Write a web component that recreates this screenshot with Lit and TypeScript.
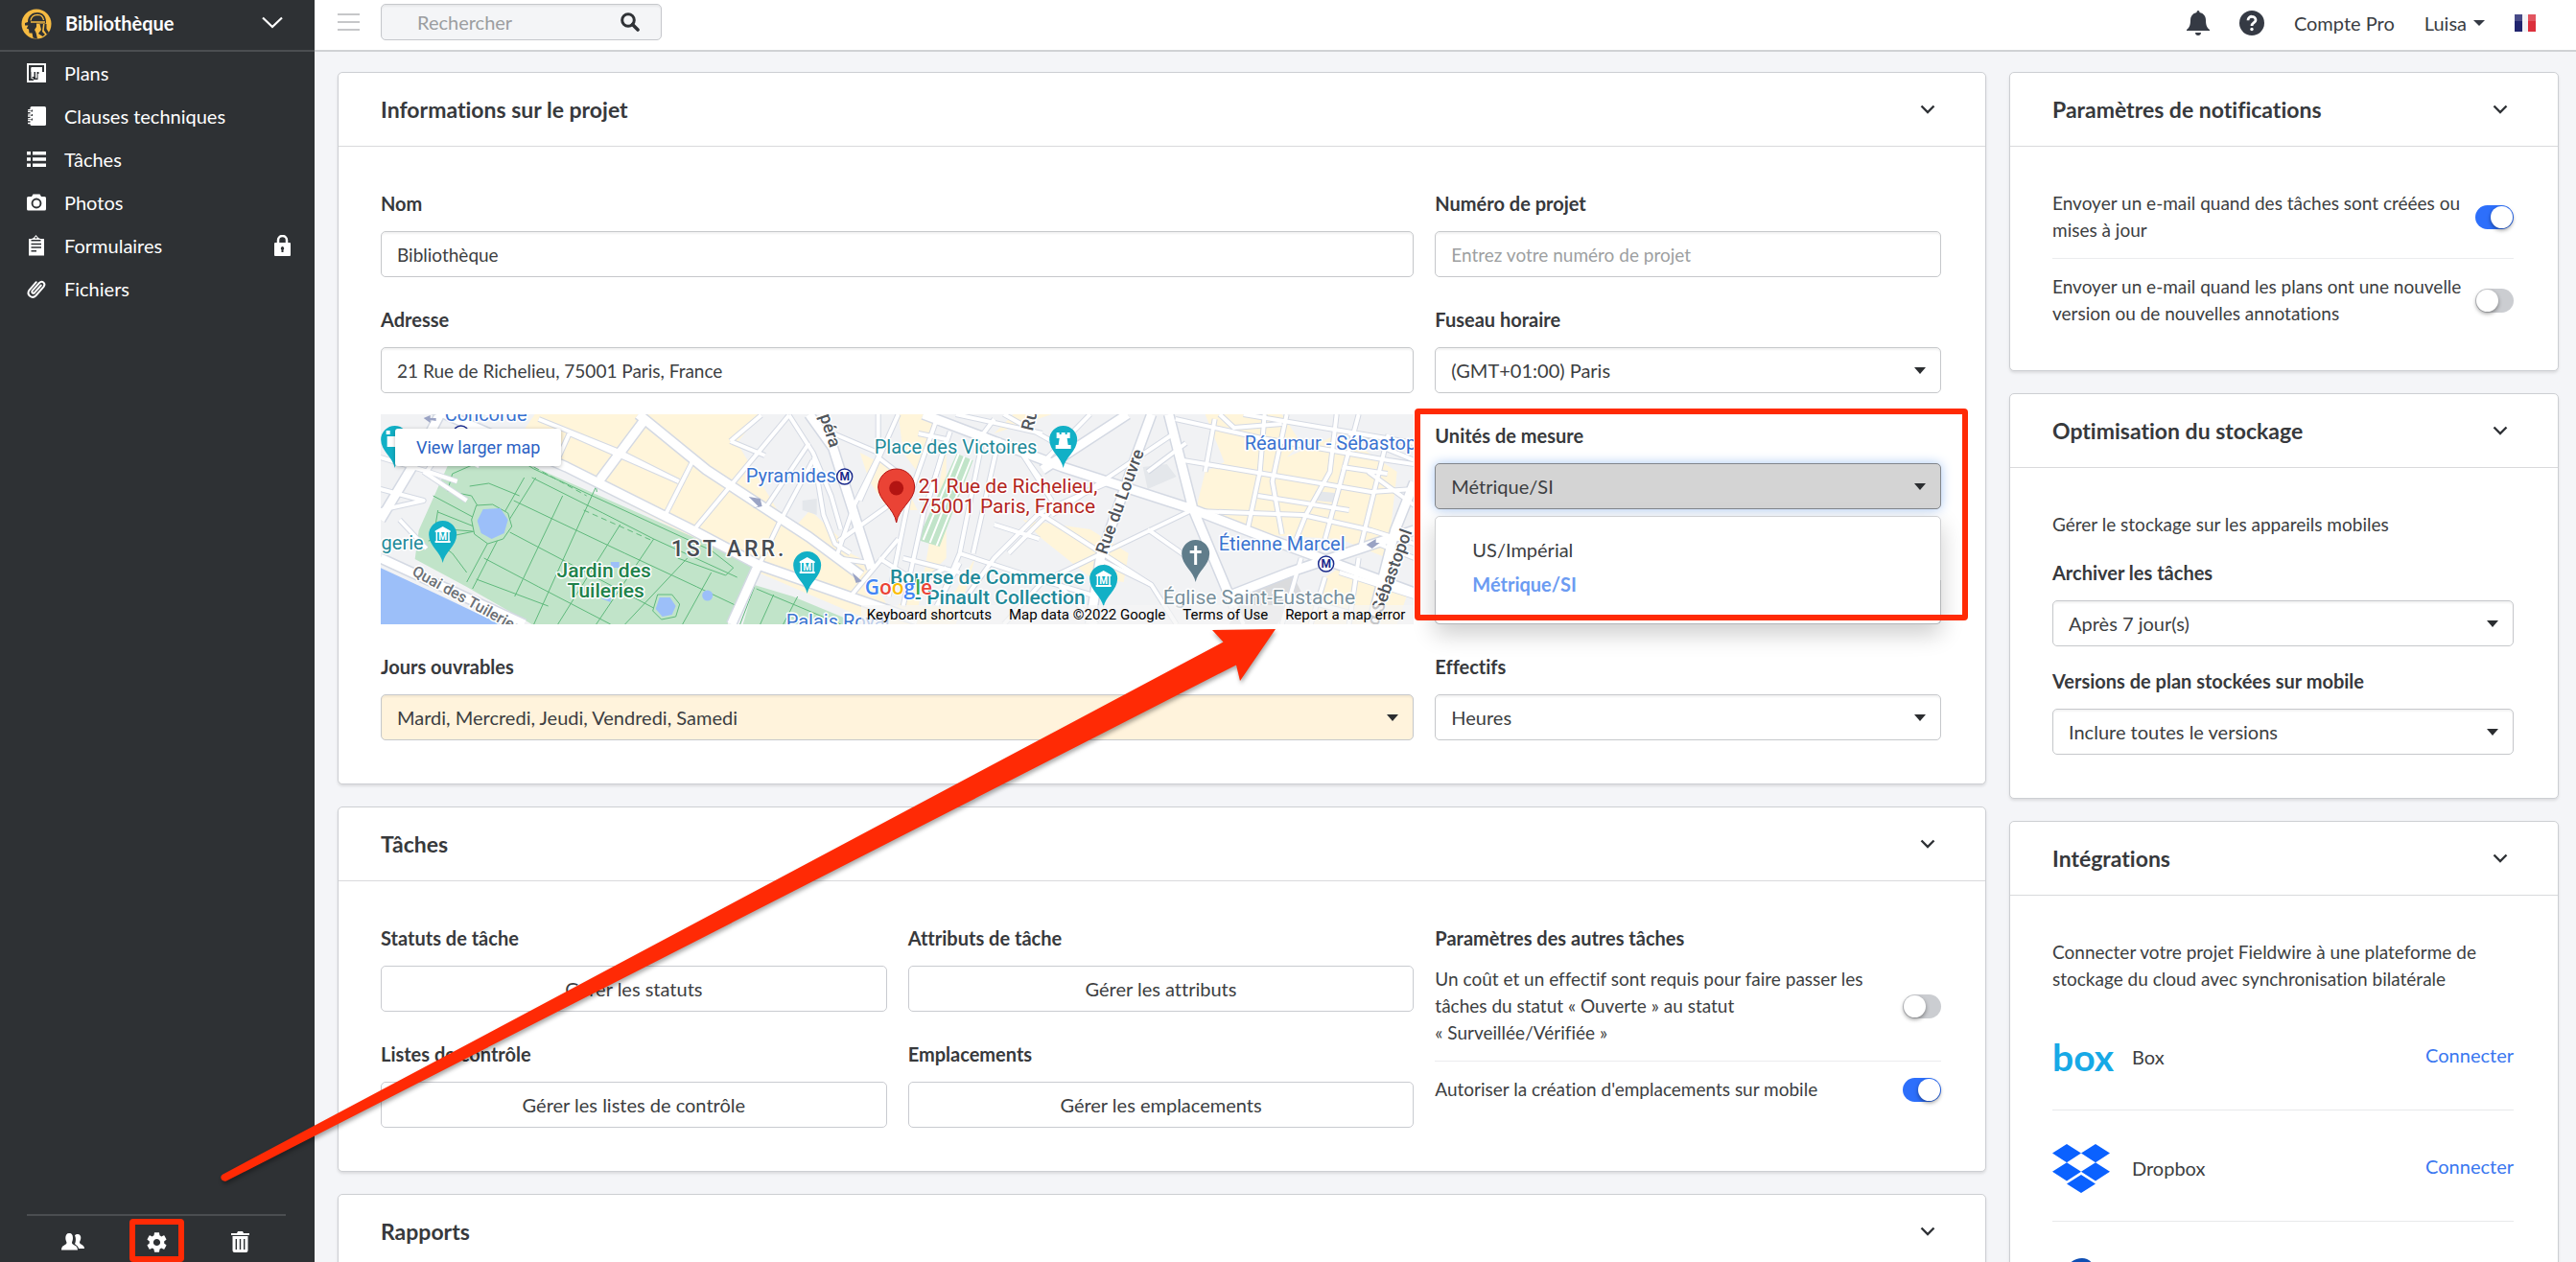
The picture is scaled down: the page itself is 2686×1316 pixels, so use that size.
import { LitElement, html, css, svg, nothing } from "lit";
import { customElement, property } from "lit/decorators.js";

const base = css`
  *, *::before, *::after { box-sizing: border-box; }
  button, input, select { font: inherit; color: inherit; margin: 0; }
  button { background: none; border: 0; padding: 0; cursor: pointer; }
  a { color: inherit; text-decoration: none; }
  p, h2, ul { margin: 0; padding: 0; }
  ul { list-style: none; }
  svg { display: block; }
`;

const icons = {
  plans: svg`<path fill="#fff" fill-rule="evenodd" d="M0 0H20V20H0ZM2 2V18H6.500V16H4.500V4H16V2ZM16 4V9H18V2H16Z"/><path fill="#2e3134" d="M2 2H18V9H16V4H4V16H7V18H2Z"/><path fill="#fff" d="M4.500 5H15V8.500H12.500V9.500H18V18H7.500V16.500H5.500V9H4.500Z"/><path fill="#2e3134" d="M7.500 9H9V15.500H5.500V14H7.500ZM10.500 9H12.500V11H11.500V17H7V15.500H10.500Z"/>`,
  book: svg`<path fill="#fff" d="M5 0H18.500Q20 0 20 1.500V18.500Q20 20 18.500 20H5Q3.500 20 3.500 18.500V1.500Q3.500 0 5 0Z"/><g fill="none" stroke="#2e3134" stroke-width="2"><path d="M3 4.500H6M3 9H6M3 13.500H6"/></g><g fill="none" stroke="#fff" stroke-width="1.400"><path d="M5 3.600H1.200M1 5.400H4.500M5 8.100H1.200M1 10H4.500M5 12.600H1.200M1 14.500H4.500M4.500 17.500H1"/></g>`,
  list: svg`<path fill="#fff" d="M0 2H4V5.500H0ZM6 2H20V5.500H6ZM0 8.200H4V11.700H0ZM6 8.200H20V11.700H6ZM0 14.400H4V18H0ZM6 14.400H20V18H6Z"/>`,
  camera: svg`<path fill="#fff" fill-rule="evenodd" d="M6.500 1.500H13.500L15 4H18.500Q20 4 20 5.500V17Q20 18.500 18.500 18.500H1.500Q0 18.500 0 17V5.500Q0 4 1.500 4H5ZM10 5.600A5.400 5.400 0 1 0 10 16.400A5.400 5.400 0 1 0 10 5.600Z"/><circle cx="10" cy="11" r="3.500" fill="#fff"/>`,
  form: svg`<path fill="#fff" d="M2 3H5L7 2L9.500 -1L12 2L14 3H18V20.500H2Z"/><path stroke="#2e3134" stroke-width="1.400" d="M4.500 4.800H14.500M4.500 8.500H15M4.500 12H15M4.500 15.800H10"/><circle cx="9.500" cy="1.800" r="1" fill="#2e3134"/>`,
  clip: svg`<path fill="none" stroke="#fff" stroke-width="2" stroke-linecap="round" d="M14.800 6.500L8 14.200C6.600 15.700 4.300 13.800 5.700 12.200L13 4C15.800 1.200 20 4.400 17.600 7.800L9.400 17.200C5.500 21.200 -.8 16.500 2.500 11.500L9.800 3.200"/>`,
};

@customElement("fw-sidebar")
class FwSidebar extends LitElement {
  static styles = [base, css`
    :host { display: flex; flex-direction: column; background: #2e3134; color: #fff; font-size: 20px; }
    .project { display: flex; align-items: center; height: 54px; padding: 0 33px 5px 22px; border-bottom: 2px solid #4b4e51; font-weight: 700; width: 100%; text-align: left; gap: 14px; }
    .project svg.logo { margin-top: 3px; }
    .name { flex: 1; }
    nav { flex: 1; }
    .item { display: flex; align-items: center; height: 45px; padding: 0 25px 2px 28px; gap: 19px; }
    .item .label { flex: 1; }
    .tools { display: flex; justify-content: center; align-items: center; margin: 0 30px 0 28px; height: 50px; border-top: 2px solid #4b4e51; padding-top: 6px; }
    .tool { display: grid; place-items: center; width: 87px; height: 40px; position: relative; }
    .marked::after { content: ""; position: absolute; left: 15px; right: 15px; top: -4px; height: 45px; border: 6px solid #ff2a05; border-radius: 4px; }
  `];
  items = [
    ["Plans", icons.plans], ["Clauses techniques", icons.book], ["Tâches", icons.list],
    ["Photos", icons.camera], ["Formulaires", icons.form, true], ["Fichiers", icons.clip],
  ] as const;
  render() {
    return html`
      <button class="project">
        <svg class="logo" width="32" height="32" viewBox="0 0 32 32">
          <circle cx="16" cy="16" r="15.500" fill="#f6bb42"/>
          <path fill="#2e3134" d="M7 14C7 7 12 4 17 4C22.500 4 26 8 26 13.500V15.500H16V19L14 22L15.500 25L17 31.500L12.500 30.500L11.500 25.500H8.500L8 21.500L5.800 20.500L7.500 17.500H4V15Z"/>
          <path fill="none" stroke="#f6bb42" stroke-width="1.300" d="M10 12.500C10.500 9 13 6.500 17 6.300C20.500 6.300 23 8.500 23.500 12M10 14H25"/>
          <path fill="#2e3134" d="M19.500 16H23L22 24L25 27L22.500 29L18 26L21 22ZM24.500 16H26.500V21L29 25L27 27L23.800 22.500Z"/>
        </svg>
        <span class="name">Bibliothèque</span>
        <svg width="22" height="13" viewBox="0 0 22 13"><path d="M1 1.500L11 11L21 1.500" fill="none" stroke="#fff" stroke-width="2.200"/></svg>
      </button>
      <nav>${this.items.map(([label, icon, locked]) => html`
        <a class="item" href="#">
          <svg width="20" height="20" viewBox="0 0 20 20" overflow="visible">${icon}</svg>
          <span class="label">${label}</span>
          ${locked ? html`<svg width="17" height="22" viewBox="0 0 17 22"><path fill="none" stroke="#fff" stroke-width="2.500" d="M4 9V5.500A4.500 4.500 0 0 1 13 5.500V9"/><rect y="8" width="17" height="14" rx="1" fill="#fff"/><path fill="#2e3134" d="M8.500 12A2 2 0 0 1 9.500 15.500V18H7.500V15.500A2 2 0 0 1 8.500 12Z"/></svg>` : nothing}
        </a>`)}
      </nav>
      <div class="tools">
        <button class="tool" aria-label="Personnes"><svg width="24" height="18" viewBox="0 0 24 18"><path fill="#fff" d="M16.500 1C19 .7 20.500 2.500 20.300 5C20.200 7.300 19 8.500 19 9.500C19 12 24 11.500 24 16H18C17.500 13 15 12.500 14 11C15 9.500 15.500 5 14 2.500C14.500 1.500 15.500 1 16.500 1ZM8 0C11 0 12 2 12 5C12 7.500 11 8.500 11 10C11 12.500 17 12 17 17.500H0C0 12 5.500 12.500 5.500 10C5.500 8.500 4.300 7.500 4.300 5C4.300 2 5.500 0 8 0Z"/></svg></button>
        <button class="tool marked" aria-label="Paramètres"><svg width="21" height="21" viewBox="1.800 1.800 20.400 20.400"><path fill="#fff" d="M19.430 12.980c.04-.32.07-.64.07-.98s-.03-.66-.07-.98l2.110-1.650c.19-.15.24-.42.12-.64l-2-3.460c-.12-.22-.39-.3-.61-.22l-2.490 1c-.52-.4-1.080-.73-1.690-.98l-.38-2.650C14.460 2.180 14.250 2 14 2h-4c-.25 0-.46.18-.49.42l-.38 2.650c-.61.25-1.170.59-1.690.98l-2.490-1c-.23-.09-.49 0-.61.22l-2 3.460c-.13.22-.07.49.12.64l2.110 1.650c-.04.32-.07.65-.07.98s.03.66.07.98l-2.110 1.650c-.19.15-.24.42-.12.64l2 3.460c.12.22.39.3.61.22l2.490-1c.52.4 1.080.73 1.690.98l.38 2.650c.03.24.24.42.49.42h4c.25 0 .46-.18.49-.42l.38-2.650c.61-.25 1.170-.59 1.690-.98l2.490 1c.23.09.49 0 .61-.22l2-3.460c.12-.22.07-.49-.12-.64l-2.110-1.650zM12 15.500c-1.930 0-3.500-1.570-3.500-3.500s1.570-3.500 3.500-3.500 3.500 1.570 3.500 3.500-1.570 3.500-3.500 3.500z"/></svg></button>
        <button class="tool" aria-label="Corbeille"><svg width="19" height="22" viewBox="0 0 19 22"><path fill="#fff" fill-rule="evenodd" d="M0 2H6L7 0H12L13 2H19V4H0ZM1.500 5H17.500V20Q17.500 22 15.500 22H3.500Q1.500 22 1.500 20ZM4.600 8V19H6V8ZM8.800 8V19H10.200V8ZM13 8V19H14.400V8Z"/></svg></button>
      </div>`;
  }
}

@customElement("fw-topbar")
class FwTopbar extends LitElement {
  static styles = [base, css`
    :host { display: flex; align-items: center; height: 54px; padding: 0 42px 0 24px; background: #fff; border-bottom: 2px solid #d0d2d5; font-size: 20px; color: #3a3d42; }
    .menu { display: grid; gap: 6px; width: 23px; margin: 0 22px 7px 0; }
    .menu i { height: 2px; background: #c6c7c9; }
    .search { display: flex; align-items: center; width: 293px; height: 38px; margin-bottom: 7px; padding: 0 22px 0 37px; border: 1px solid #c6c8cc; border-radius: 5px; background: #f4f5f7; box-shadow: inset 0 2px 2px #0000000d; }
    .search input { flex: 1; min-width: 0; border: 0; background: none; outline: 0; padding: 0; }
    .search input::placeholder { color: #9b9da0; opacity: 1; }
    .right { margin-left: auto; display: flex; align-items: center; gap: 31px; padding-bottom: 4px; }
    .user { display: flex; align-items: center; gap: 7px; }
  `];
  render() {
    return html`
      <button class="menu" aria-label="Menu"><i></i><i></i><i></i></button>
      <div class="search">
        <input type="search" aria-label="Rechercher" placeholder="Rechercher">
        <button aria-label="Lancer la recherche"><svg width="20" height="20" viewBox="0 0 20 20"><circle cx="8" cy="8" r="6.300" fill="none" stroke="#2f3236" stroke-width="3"/><path d="M12.500 12.500L18 18" stroke="#2f3236" stroke-width="3.600" stroke-linecap="round"/></svg></button>
      </div>
      <div class="right">
        <button aria-label="Notifications"><svg width="24" height="26" viewBox="0 0 24 26"><path fill="#353a44" d="M12 0C13 0 13.500 .8 13.500 2C18 3 20 6 20 10C20 16 21.500 18 24 20V21H0V20C2.500 18 4 16 4 10C4 6 6 3 10.500 2C10.500 .8 11 0 12 0ZM9 23H15C15 25 13.700 26 12 26S9 25 9 23Z"/></svg></button>
        <button aria-label="Aide"><svg width="26" height="26" viewBox="0 0 26 26"><circle cx="13" cy="13" r="13" fill="#353a44"/><path d="M9 10.200C9 4.800 17.200 5.200 17 10C16.900 12.800 13 12.600 13 16" fill="none" stroke="#fff" stroke-width="2.800"/><circle cx="13" cy="19.500" r="1.700" fill="#fff"/></svg></button>
        <a href="#">Compte Pro</a>
        <button class="user">Luisa <svg width="12" height="6" viewBox="0 0 12 6"><path fill="#353a44" d="M0 0H12L6 6Z"/></svg></button>
        <button aria-label="Langue"><svg width="22" height="18" viewBox="0 0 22 18"><rect width="8" height="18" fill="#20246e"/><rect x="8" width="6" height="18" fill="#f2f2f4"/><rect x="14" width="8" height="18" fill="#dc2f3c"/><rect width="22" height="7" fill="#fff" opacity=".18"/></svg></button>
      </div>`;
  }
}

@customElement("fw-card")
class FwCard extends LitElement {
  static styles = [base, css`
    :host { display: block; background: #fff; border: 1px solid #cdcfd3; border-radius: 5px; box-shadow: 0 2px 3px #0000001a; }
    header { display: flex; align-items: center; justify-content: space-between; height: 77px; padding: 0 52px 0 44px; border-bottom: 1px solid #d9dadc; }
    h2 { font-size: 23px; line-height: 30px; font-weight: 700; color: #37393c; }
    .body { padding: 45px 46px 45px 44px; }
  `];
  @property() heading = "";
  render() {
    return html`
      <header><h2>${this.heading}</h2>
        <button aria-label="Réduire"><svg width="16" height="10" viewBox="0 0 16 10"><path d="M1.500 1.500L8 8L14.500 1.500" fill="none" stroke="#2f3236" stroke-width="2.400"/></svg></button>
      </header>
      <div class="body"><slot></slot></div>`;
  }
}

const controls = css`
  .field { display: grid; gap: 15px; min-width: 0; }
  .label { font-size: 20px; font-weight: 700; line-height: 28px; color: #37393c; }
  .input, .select select { width: 100%; height: 48px; border: 1px solid #c6c8cb; border-radius: 5px; background: #fff; padding: 0 16px; outline: 0; box-shadow: inset 0 2px 2px #0000000d; }
  .input::placeholder { color: #9d9fa1; opacity: 1; }
  .select { display: grid; align-items: center; font-size: 20px; }
  .select > * { grid-area: 1 / 1; }
  .select select { appearance: none; }
  .select svg { justify-self: end; margin-right: 16px; pointer-events: none; }
  .warm select { background: #fff3dc; }
  .open select { background: #d4d4d4; border-color: #82868c; box-shadow: 0 0 12px #a9c8f4; }
  .rows { display: grid; gap: 15px; align-content: start; }
  .toggle { display: flex; align-items: center; justify-content: space-between; gap: 10px; line-height: 28px; }
  .toggle + .toggle { border-top: 1px solid #ebecee; padding-top: 15px; }
  .switch { appearance: none; flex: none; display: flex; width: 40px; height: 25px; border-radius: 13px; background: #cbcdd1; }
  .switch::before { content: ""; width: 23px; height: 23px; margin: 1px; border-radius: 50%; background: #fff; box-shadow: 0 2px 4px #0006; }
  .switch:checked { background: #2d6ffb; justify-content: flex-end; }
`;

const select = (id: string, label: string, value: string, kind = "") => html`
  <div class="field">
    <label class="label" for=${id}>${label}</label>
    <div class="select ${kind}">
      <select id=${id}><option>${value}</option></select>
      <svg width="12" height="7" viewBox="0 0 12 7"><path fill="#2b2d30" d="M0 0H12L6 7Z"/></svg>
    </div>
  </div>`;

const toggle = (label: string, on: boolean) => html`
  <label class="toggle"><span>${label}</span><input class="switch" type="checkbox" role="switch" .checked=${on}></label>`;

@customElement("fw-map")
class FwMap extends LitElement {
  static styles = [base, css`
    :host { display: block; position: relative; height: 219px; overflow: hidden; font-family: Roboto, sans-serif; }
    .canvas { width: 100%; height: 100%; }
    .canvas text { font-family: Roboto, sans-serif; font-size: 20px; paint-order: stroke; stroke: #fff; stroke-width: 3px; stroke-linejoin: round; }
    .canvas .blue { fill: #3a73d0; }
    .canvas .teal { fill: #1f8a99; }
    .canvas .museum { font-size: 21px; font-weight: 500; }
    .canvas .green { fill: #20824a; font-size: 21px; font-weight: 500; text-anchor: middle; }
    .canvas .street { fill: #50555b; font-size: 18px; font-weight: 500; }
    .canvas .quay { fill: #6b7076; font-size: 16px; }
    .canvas .slate { fill: #78909c; font-size: 21px; }
    .canvas .place { fill: #b3261e; font-size: 21px; }
    .canvas .district { fill: #474c52; font-size: 23px; font-weight: 500; letter-spacing: 3px; }
    .canvas .mark { fill: #1a2a8c; font-size: 12px; font-weight: 700; text-anchor: middle; stroke: none; }
    .canvas .pinmark { fill: #fff; font-size: 10px; font-weight: 700; text-anchor: middle; stroke: none; }
    .canvas .brand { font-family: "Open Sans", sans-serif; font-size: 21px; font-weight: 600; stroke-width: 2px; }
    .larger { position: absolute; left: 15px; top: 15px; padding: 0 22px; line-height: 39px; font-size: 18px; color: #2b62c4; background: #fff; border-radius: 3px; box-shadow: 0 1px 4px #0004; }
    .legal { position: absolute; right: 0; bottom: 0; display: flex; gap: 18px; padding: 0 9px 0 6px; font-size: 15px; line-height: 20px; color: #000; background: #f5f5f5b3; }
  `];
  minor = [
    "M197 20L311 70", "M165 5L247 38L311 70", "M326 48L297 105", "M397 1L365 28M426 1L329 118", "M365 28L401 43",
    "M426 1L451 40L470 85L480 120", "M451 48L415 115L396 155", "M447 30L400 100M452 45L462 105L474 135L490 145",
    "M472 20L519 40M519 0L519 45L494 95M540 0L500 90M519 45L545 65M494 95L475 150L510 155",
    "M478 132L530 95M540 130L490 190M520 150L560 175L590 160", "M197 20L183 51", "M0 78L45 90L0 100M45 60L90 90M20 110L48 140",
    "M0 45L50 60L80 70M48 60L70 30L140 40M100 55L118 20", "M579 8L551 88L530 190M594 18L567 100L545 200",
    "M629 21L604 145L583 195M645 25L618 145M579 8L629 21L669 41L700 90", "M561 20L590 26L570 95M640 5L625 25",
    "M604 145L683 171L747 190M604 155L580 200M545 150L604 165", "M669 41L690 70M762 70L687 103L640 150L604 200",
    "M687 103L804 178M844 101L690 175L650 219M826 21L700 105M800 60L840 30", "M747 150L804 178L830 219M700 170L747 219",
    "M640 115L687 130M655 145L700 100", "M829 5L919 25L1051 48L1078 52M837 48L915 61L1033 81L1078 78M851 101L962 105L1033 121L1078 135",
    "M922 0L917 60L904 121M945 0L930 70L940 125M997 0L990 60L965 105L955 130M1051 21L1022 138M1020 0L1000 75L985 130",
    "M870 5L860 60M915 85L1010 100M1003 55L1050 62M900 0L1078 30M1010 20L1078 48M1030 60L1078 95",
    "M960 150L940 219M985 170L970 219M1000 165L1078 190M1020 150L1010 219M930 185L1040 215M1040 135L1078 150",
    "M740 0L690 51M650 0L700 28M800 120L850 155M885 185L900 219M600 0L690 20M875 0L890 14L940 10",
  ];
  pin(x: number, y: number, color: string, mark: unknown) {
    return svg`<g transform="translate(${x} ${y})"><path fill=${color} d="M0 0C-2 -11 -14.500 -18 -14.500 -29.500A14.500 14.500 0 0 1 14.500 -29.500C14.500 -18 2 -11 0 0Z"/>${mark}</g>`;
  }
  museum() {
    return svg`<path fill="#fff" d="M0 -38L8 -33.500V-32H-8V-33.500ZM-8 -23H8V-21H-8Z"/><path fill="none" stroke="#fff" stroke-width="1.500" d="M-6.300 -32V-23M6.300 -32V-23"/><text class="pinmark" x="0" y="-23.800">M</text>`;
  }
  render() {
    const teal = "#12b0c6";
    return html`
      <svg class="canvas" viewBox="0 0 1078 219" preserveAspectRatio="xMidYMid slice" role="img" aria-label="Carte">
        <rect width="1078" height="219" fill="#f1f2f4"/>
        <g fill="#fff5da">
          <path d="M161 0H395L372 30L420 110L500 150L540 219H520L394 165L194 60L140 30Z"/>
          <path d="M540 0H579L560 60L545 40ZM590 30L561 200H590L620 150L600 219H520L590 150Z"/>
          <path d="M860 0H940L960 30L945 45L1000 20L1060 60L1050 150L1000 130L905 125L850 100L860 60L880 50ZM1000 160L1070 190L1060 219H960L985 170Z"/>
          <path d="M670 110L740 120L780 145L775 175L740 170L690 130ZM660 0L700 0L640 20ZM500 40L540 60L560 100L530 100L510 70ZM448 100L480 130L460 150L430 120Z"/>
        </g>
        <g fill="#e4e7eb"><path d="M795 55L820 52L830 65L800 78ZM440 90L455 88L455 105L440 100ZM975 80L995 82V92L975 90Z"/><path fill="#dadbdd" d="M900 190L950 165L960 185L935 219H885Z"/></g>
        <path fill="#9cbff9" d="M0 160L60 188L125 219H0Z"/>
        <path fill="#c1e4c9" d="M70 54H158L326 128L390 158L362 219H158L90 180L36 151L40 121Z"/>
        <path fill="#c1e4c9" d="M390 178L430 190L500 219H378Z"/>
        <path fill="#c1e4c9" d="M601 41L618 48L583 138L560 131Z"/>
        <g fill="none" stroke="#5fb97c" stroke-width="1">
          <path d="M75 62L130 38L160 57L345 142L368 160L360 168L310 150M158 66L232 103L285 130L372 170M55 85L98 108M150 66L125 110L90 175M162 66L128 120L96 182M139 90L255 145L330 180L372 200M135 123L215 165L300 210M108 150L165 180L240 219M190 85L140 190M225 75L160 219M250 115L185 219M285 130L225 219M320 150L255 219M345 165L315 219M75 62L70 80L95 85L104 100M93 75L113 72L145 85M60 100L55 130L75 145L90 165M50 132L98 122M60 102L100 118M71 120L96 122M100 172L175 200M390 180L375 219M410 188L396 219M435 190L420 219M392 182L480 219"/>
          <path stroke-dasharray="6 4" d="M160 55L215 85M212 100L284 132M225 75L226 85"/>
          <path fill="#c1e4c9" d="M100 95L117 94L133 103L137 117L128 130L112 135L98 125L95 110ZM289 188L304 188L312 198L308 211L293 214L284 205Z"/>
        </g>
        <g fill="#9cbff9"><path d="M107 99L125 98L133 110L129 124L116 130L105 124L101 111ZM291 191L302 191L308 200L304 209L294 211L287 203ZM240 154H249V160H241ZM230 192L240 190V196Z"/><circle cx="341" cy="189" r="5.500"/></g>
        <g fill="none" stroke="#d4d9e3" stroke-linejoin="round">
          <g stroke-width="6">${this.minor.map(d => svg`<path d=${d}/>`)}</g>
          <g stroke-width="12"><path d="M54 -6L194 55L326 121L394 157L560 215M269 0L340 58L401 98L447 128L501 168M276 5L229 68M447 0L472 35L512 161M566 0L711 55L844 98L929 131L1078 186M804 0L790 38L751 148L740 219M690 58L779 0M822 0L847 98L890 201M883 190L947 165L1078 121M1078 71L1058 121L1033 219M62 0L36 50L0 110M394 157L366 219M0 150L150 219"/></g>
        </g>
        <g fill="none" stroke="#fff" stroke-linejoin="round">
          <g stroke-width="4">${this.minor.map(d => svg`<path d=${d}/>`)}</g>
          <g stroke-width="9"><path d="M54 -6L194 55L326 121L394 157L560 215M269 0L340 58L401 98L447 128L501 168M276 5L229 68M447 0L472 35L512 161M566 0L711 55L844 98L929 131L1078 186M804 0L790 38L751 148L740 219M690 58L779 0M822 0L847 98L890 201M883 190L947 165L1078 121M1078 71L1058 121L1033 219M62 0L36 50L0 110M394 157L366 219M0 150L150 219"/></g>
        </g>
        <g fill="none" stroke="#fff" stroke-width="2"><path d="M609 44L573 134M616 47L580 137M603 41L566 131"/></g>
        <g fill="#9aa3c4"><path d="M45 4L52 1V4H58V7L52 6V9ZM384 86L394 96L388 98L398 96L396 88ZM1028 136L1038 130V134H1042L1034 140ZM492 165L502 174L496 176Z"/></g>
        <text class="blue" x="67" y="7">Concorde</text>
        <circle cx="84" cy="20" r="8" fill="#fff" stroke="#1a2a8c" stroke-width="1.500"/>
        <text class="blue" x="381" y="71">Pyramides</text>
        <text class="blue" x="901" y="37">Réaumur - Sébastopol</text>
        <text class="blue" x="874" y="142">Étienne Marcel</text>
        <text class="blue" x="423" y="223">Palais Royal</text>
        <circle cx="484" cy="65" r="8" fill="#fff" stroke="#1a2a8c" stroke-width="1.500"/><text class="mark" x="484" y="69">M</text>
        <circle cx="986" cy="156" r="8" fill="#fff" stroke="#1a2a8c" stroke-width="1.500"/><text class="mark" x="986" y="160">M</text>
        <text class="teal" x="515" y="41">Place des Victoires</text>
        <text class="teal" x="45" y="141" text-anchor="end">Orangerie</text>
        <text class="teal museum" x="734" y="177" text-anchor="end">Bourse de Commerce</text>
        <text class="teal museum" x="735" y="198" text-anchor="end">- Pinault Collection</text>
        <text class="slate" x="816" y="198">Église Saint-Eustache</text>
        <text class="street quay" transform="translate(32 167) rotate(29)">Quai des Tuileries</text>
        <text class="street" transform="translate(454 -10) rotate(72)">Opéra</text>
        <text class="street" transform="translate(680 18) rotate(-76)">Rue</text>
        <text class="street" transform="translate(757 147) rotate(-70)">Rue du Louvre</text>
        <text class="street" transform="translate(1036 232) rotate(-70)">Bd Sébastopol</text>
        <text class="green" x="233" y="170">Jardin des</text>
        <text class="green" x="235" y="191">Tuileries</text>
        <text class="district" x="303" y="148">1ST ARR.</text>
        ${this.pin(15, 56, teal, svg`<path fill="#fff" d="M-8 -33H8V-22H-8ZM-9 -39H-5V-35H-9Z"/>`)}
        ${this.pin(65, 155, teal, this.museum())}
        ${this.pin(445, 187, teal, this.museum())}
        ${this.pin(754, 201, teal, this.museum())}
        ${this.pin(712, 56, teal, svg`<path fill="#fff" d="M-7 -37H-4V-35H-2V-37H2V-35H4V-37H7V-31H4L5 -24H8V-20H-8V-24H-5L-4 -31H-7Z"/>`)}
        ${this.pin(850, 175, "#607d8b", svg`<path fill="#fff" d="M-1.500 -38H1.500V-33H6V-30H1.500V-18H-1.500V-30H-6V-33H-1.500Z"/>`)}
        <path fill="#ea4335" stroke="#b31412" stroke-width="1" d="M538 113C536 98 519 90 519 76A19 19 0 0 1 557 76C557 90 540 98 538 113Z"/>
        <circle cx="538" cy="77" r="7.500" fill="#b31412"/>
        <text class="place" x="561" y="82">21 Rue de Richelieu,</text>
        <text class="place" x="561" y="103">75001 Paris, France</text>
        <text class="brand" x="505" y="188"><tspan fill="#4285f4">G</tspan><tspan fill="#ea4335">o</tspan><tspan fill="#fbbc04">o</tspan><tspan fill="#4285f4">g</tspan><tspan fill="#34a853">l</tspan><tspan fill="#ea4335">e</tspan></text>
      </svg>
      <a class="larger" href="#">View larger map</a>
      <div class="legal"><button>Keyboard shortcuts</button><span>Map data ©2022 Google</span><a href="#">Terms of Use</a><a href="#">Report a map error</a></div>`;
  }
}

@customElement("app-root")
class AppRoot extends LitElement {
  static styles = [base, controls, css`
    :host { display: grid; grid-template-columns: 328px minmax(0, 1fr); height: 100vh; overflow: hidden; position: relative; background: #f4f5f8; color: #3c3e41; font: 19px/28px Lato, "Open Sans", sans-serif; font-variant-ligatures: no-common-ligatures; }
    .page { display: flex; flex-direction: column; min-width: 0; min-height: 0; }
    fw-topbar { flex: none; }
    main { flex: 1; min-height: 0; overflow-y: auto; scrollbar-width: none; display: grid; grid-template-columns: 3fr 1fr; gap: 24px; align-items: start; padding: 21px 18px 24px 24px; }
    .column { display: grid; gap: 23px; min-width: 0; }
    .form { display: grid; grid-template-columns: repeat(3, minmax(0, 1fr)); gap: 30px 22px; }
    .wide { grid-column: span 2; }
    .stack { display: grid; gap: 30px; align-content: start; }
    .address { display: grid; gap: 22px; }
    .tight { display: grid; gap: 22px; }
    .units { position: relative; z-index: 1; }
    .units::after { content: ""; position: absolute; left: -21px; right: -28px; top: -14px; height: 221px; border: 6px solid #ff2a05; border-radius: 4px; pointer-events: none; }
    .options { position: absolute; left: 0; right: 0; top: 98px; height: 113px; padding: 16px 0; background: #fff; border: 1px solid #cfd0d2; border-radius: 5px; box-shadow: 0 10px 24px #0003; }
    .options::after { content: ""; position: absolute; inset: auto -1px -1px; height: 46px; border: solid #b4b6b9; border-width: 0 1px 1px; border-radius: 0 0 5px 5px; pointer-events: none; }
    .options li { padding: 0 38px; font-size: 20px; line-height: 36px; cursor: pointer; }
    .options .chosen { color: #6b9bf2; font-weight: 700; }
    .action { height: 48px; width: 100%; font-size: 20px; background: #fff; border: 1px solid #c9cbd0; border-radius: 5px; }
    .service { display: flex; align-items: center; justify-content: space-between; height: 116px; border-bottom: 1px solid #e8e9eb; font-size: 20px; }
    .service > div { display: flex; align-items: center; gap: 23px; padding-top: 5px; }
    .service a { color: #3a77f0; }
    .services { padding-top: 7px; }
    .boxlogo { font-size: 39px; line-height: 40px; width: 60px; font-weight: 700; color: #17a9e6; }
    .arrow { position: absolute; left: 220px; top: 640px; z-index: 2; pointer-events: none; filter: drop-shadow(1px 3px 2px #0005); }
  `];
  render() {
    const action = (label: string, text: string) => html`
      <div class="field"><span class="label">${label}</span><button class="action">${text}</button></div>`;
    return html`
      <fw-sidebar></fw-sidebar>
      <div class="page">
        <fw-topbar></fw-topbar>
        <main>
          <div class="column">
            <fw-card heading="Informations sur le projet">
              <div class="form">
                <div class="field wide"><label class="label" for="name">Nom</label><input class="input" id="name" value="Bibliothèque"></div>
                <div class="field"><label class="label" for="number">Numéro de projet</label><input class="input" id="number" placeholder="Entrez votre numéro de projet"></div>
                <div class="address wide">
                  <div class="field"><label class="label" for="address">Adresse</label><input class="input" id="address" value="21 Rue de Richelieu, 75001 Paris, France"></div>
                  <fw-map></fw-map>
                </div>
                <div class="stack">
                  ${select("tz", "Fuseau horaire", "(GMT+01:00) Paris")}
                  <div class="units">
                    ${select("units", "Unités de mesure", "Métrique/SI", "open")}
                    <ul class="options" role="listbox" aria-label="Unités de mesure">
                      <li role="option">US/Impérial</li>
                      <li role="option" aria-selected="true" class="chosen">Métrique/SI</li>
                    </ul>
                  </div>
                </div>
                <div class="wide">${select("days", "Jours ouvrables", "Mardi, Mercredi, Jeudi, Vendredi, Samedi", "warm")}</div>
                ${select("manpower", "Effectifs", "Heures")}
              </div>
            </fw-card>
            <fw-card heading="Tâches">
              <div class="form">
                <div class="stack">
                  ${action("Statuts de tâche", "Gérer les statuts")}
                  ${action("Listes de contrôle", "Gérer les listes de contrôle")}
                </div>
                <div class="stack">
                  ${action("Attributs de tâche", "Gérer les attributs")}
                  ${action("Emplacements", "Gérer les emplacements")}
                </div>
                <div class="rows">
                  <span class="label">Paramètres des autres tâches</span>
                  ${toggle("Un coût et un effectif sont requis pour faire passer les tâches du statut «\u00a0Ouverte\u00a0» au statut «\u00a0Surveillée/Vérifiée\u00a0»", false)}
                  ${toggle("Autoriser la création d'emplacements sur mobile", true)}
                </div>
              </div>
            </fw-card>
            <fw-card heading="Rapports"></fw-card>
          </div>
          <div class="column">
            <fw-card heading="Paramètres de notifications">
              <div class="rows">
                ${toggle("Envoyer un e-mail quand des tâches sont créées ou mises à jour", true)}
                ${toggle("Envoyer un e-mail quand les plans ont une nouvelle version ou de nouvelles annotations", false)}
              </div>
            </fw-card>
            <fw-card heading="Optimisation du stockage">
              <div class="tight">
                <p>Gérer le stockage sur les appareils mobiles</p>
                ${select("archive", "Archiver les tâches", "Après 7 jour(s)")}
                ${select("versions", "Versions de plan stockées sur mobile", "Inclure toutes le versions")}
              </div>
            </fw-card>
            <fw-card heading="Intégrations">
              <p>Connecter votre projet Fieldwire à une plateforme de stockage du cloud avec synchronisation bilatérale</p>
              <div class="services">
                <div class="service"><div><span class="boxlogo" aria-hidden="true">box</span><span>Box</span></div><a href="#">Connecter</a></div>
                <div class="service"><div><svg width="60" height="51" viewBox="0 0 60 51"><path fill="#0a61ff" d="M15 0L30 9.600L15 19.200L0 9.600ZM45 0L60 9.600L45 19.200L30 9.600ZM15 19.200L30 28.800L15 38.400L0 28.800ZM45 19.200L60 28.800L45 38.400L30 28.800ZM30 32L45 41.500L30 51L15 41.500Z"/></svg><span>Dropbox</span></div><a href="#">Connecter</a></div>
                <div class="service"><div><svg width="60" height="44" viewBox="0 0 60 44"><path fill="#0f4eb3" d="M14 14C16 4 24 0 31 0C37 0 42 4 44 10L30 26Z"/><path fill="#1a7bd3" d="M14 14C5 14 0 20 0 27C0 34 5 44 13 44L36 22C30 16 22 12 14 14Z"/><path fill="#29a8ea" d="M12 44H48C62 43 62 20 46 19L30 24Z"/></svg></div></div>
              </div>
            </fw-card>
          </div>
        </main>
      </div>
      <svg class="arrow" width="1120" height="600" viewBox="0 0 1120 600"><path fill="#ff2a05" d="M12.500 584.500L1055.500 29.500L1044 17L1110 16L1073 70L1069 53.500L16 591.500C11 593 8 587 12.500 584.500Z"/></svg>`;
  }
}
